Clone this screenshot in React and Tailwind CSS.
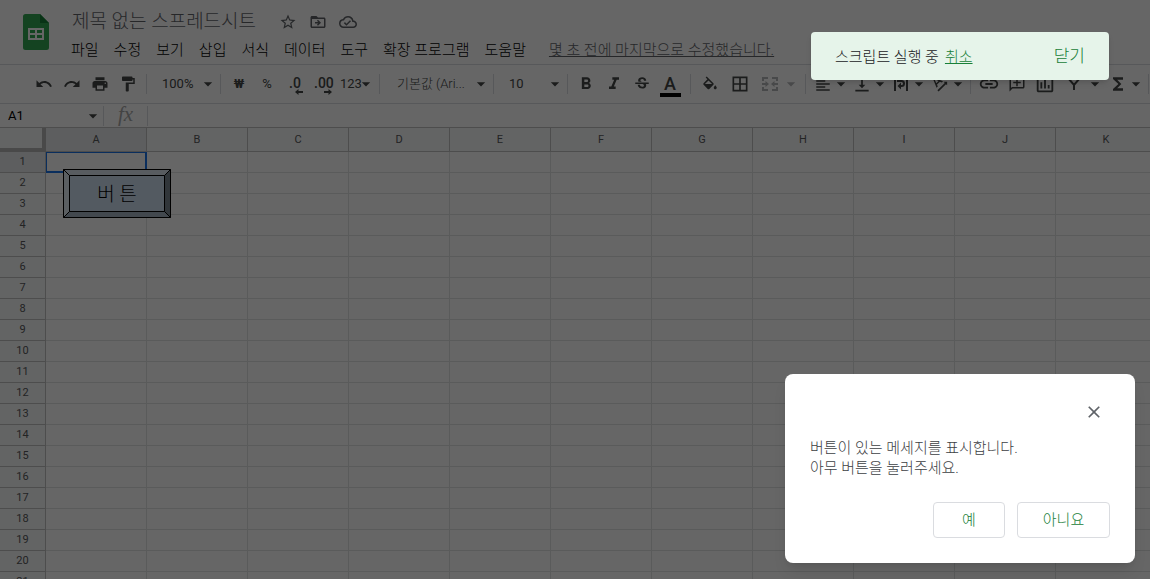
import { useState } from 'react';
import {
  MdArrowDropDown, MdBorderAll, MdClose, MdDriveFileMoveOutline, MdFormatAlignLeft,
  MdFormatBold, MdFormatItalic, MdFormatPaint, MdFunctions, MdLink,
  MdOutlineAddComment, MdOutlineCloudDone, MdOutlineInsertChart, MdPrint, MdRedo,
  MdStarBorder, MdStrikethroughS, MdTextRotationAngleup, MdUndo, MdVerticalAlignBottom,
} from 'react-icons/md';

const MENUS = ['파일', '수정', '보기', '삽입', '서식', '데이터', '도구', '확장 프로그램', '도움말'];
const COLUMNS = 'ABCDEFGHIJK'.split('');
const ROWS = Array.from({ length: 21 }, (_, i) => i + 1);

function SheetsLogo() {
  return (
    <svg width="26" height="36" viewBox="0 0 26 36" aria-hidden="true">
      <path d="M2.5 0H17l9 9v24.500a2.500 2.500 0 0 1-2.500 2.500h-21A2.500 2.500 0 0 1 0 33.500v-31A2.500 2.500 0 0 1 2.500 0z" fill="#34a853" />
      <path d="M17 0l9 9h-9z" fill="#188038" />
      <path fillRule="evenodd" d="M5 14h16v12H5zM7 16v3h5v-3zM14 16v3h5v-3zM7 21v3h5v-3zM14 21v3h5v-3z" fill="#fff" />
    </svg>
  );
}

function FillIcon() {
  return (
    <svg width="18" height="18" viewBox="0 -2 24 24" fill="currentColor" aria-hidden="true">
      <path d="M16.560 8.940 7.620 0 6.210 1.410l2.380 2.380-5.150 5.150c-.59.59-.59 1.540 0 2.120l5.500 5.500c.29.29.68.44 1.060.44s.77-.15 1.060-.44l5.500-5.500c.59-.58.59-1.530 0-2.120zM5.210 10 10 5.210 14.790 10H5.210zM19 11.500s-2 2.170-2 3.500c0 1.100.9 2 2 2s2-.9 2-2c0-1.330-2-3.500-2-3.500z" />
    </svg>
  );
}

function MergeIcon() {
  return (
    <svg width="18" height="18" viewBox="0 0 18 18" fill="none" stroke="currentColor" strokeWidth="2" aria-hidden="true">
      <path d="M2 6V3h5M11 3h5v3M2 12v3h5M11 15h5v-3" />
      <path d="M1 9h4M17 9h-4" />
      <path d="M4.500 6v6L8 9zM13.500 6v6L10 9z" fill="currentColor" stroke="none" />
    </svg>
  );
}

function WrapIcon() {
  return (
    <svg width="18" height="18" viewBox="0 0 18 18" fill="none" stroke="currentColor" strokeWidth="2" aria-hidden="true">
      <path d="M3 2v14M15 2v14M5 6h4.500a2.500 2.500 0 0 1 0 5H8" />
      <path d="M9 7.500v7L5.500 11z" fill="currentColor" stroke="none" />
    </svg>
  );
}

function FilterIcon() {
  return (
    <svg width="18" height="18" viewBox="0 0 18 18" fill="none" stroke="currentColor" strokeWidth="2" aria-hidden="true">
      <path d="M3 3h12L9 10zM9 9v6" />
    </svg>
  );
}

function DecimalIcon({ more }) {
  return (
    <svg width="8" height="6" viewBox="0 0 8 6" className={more ? 'self-end' : 'rotate-180 self-end'} aria-hidden="true">
      <path d="M0 2h4.500V0L8 3 4.500 6V4H0z" fill="currentColor" />
    </svg>
  );
}

function Tool({ label, children }) {
  return (
    <button type="button" aria-label={label} className="flex h-7 w-7 shrink-0 items-center justify-center">
      {children}
    </button>
  );
}

function MenuTool({ label, wide, children }) {
  return (
    <button type="button" aria-label={label} className="flex h-7 shrink-0 items-center">
      <span className="flex w-5 justify-center">{children}</span>
      <MdArrowDropDown size={20} className={wide ? 'ml-px' : '-ml-0.5'} />
    </button>
  );
}

function Divider() {
  return <span className="h-5 w-px shrink-0 bg-[#dadce0]" />;
}

function ToolSelect({ label, value, className }) {
  return (
    <label className={`relative flex h-7 shrink-0 items-center ${className}`}>
      <select aria-label={label} defaultValue={value} className="h-full w-full appearance-none bg-transparent">
        <option>{value}</option>
      </select>
      <MdArrowDropDown size={20} className="pointer-events-none absolute right-[2px]" />
    </label>
  );
}

function Header() {
  return (
    <header className="flex h-16 shrink-0 items-start pl-[23px]">
      <div className="pt-[14px]">
        <SheetsLogo />
      </div>
      <div className="pl-[22px]">
        <div className="flex h-10 items-center pt-1 pl-px text-[#5f6368]">
          <h1 className="pr-[23px] text-[19px] font-light whitespace-nowrap">제목 없는 스프레드시트</h1>
          <div className="flex items-center gap-3">
            <button type="button" aria-label="별표"><MdStarBorder size={18} /></button>
            <button type="button" aria-label="이동"><MdDriveFileMoveOutline size={18} /></button>
            <button type="button" aria-label="문서 상태"><MdOutlineCloudDone size={18} /></button>
          </div>
        </div>
        <nav className="flex h-5 items-center gap-[15px] text-[15px] font-light whitespace-nowrap text-black">
          {MENUS.map((menu) => (
            <button key={menu} type="button">{menu}</button>
          ))}
          <a href="#history" className="pl-2 text-[#5f6368] underline">
            몇 초 전에 마지막으로 수정했습니다.
          </a>
        </nav>
      </div>
    </header>
  );
}

function Toolbar() {
  return (
    <div className="flex h-10 shrink-0 items-center overflow-hidden border-y border-[#dadce0] pl-[30px] text-[13px] text-[#444746]">
      <Tool label="실행취소"><MdUndo size={18} /></Tool>
      <Tool label="재실행"><MdRedo size={18} /></Tool>
      <Tool label="인쇄"><MdPrint size={18} /></Tool>
      <Tool label="서식 복사"><MdFormatPaint size={18} /></Tool>
      <span className="w-1 shrink-0" />
      <Divider />
      <ToolSelect label="확대/축소" value="100%" className="w-[73px] pl-[15px]" />
      <Divider />
      <span className="w-1 shrink-0" />
      <Tool label="통화 형식"><span className="font-bold">₩</span></Tool>
      <Tool label="퍼센트 형식">%</Tool>
      <Tool label="소수점 이하 자릿수 감소">
        <span className="flex w-4 flex-col pt-1 text-[14px] leading-3 font-medium">.0<DecimalIcon /></span>
      </Tool>
      <Tool label="소수점 이하 자릿수 증가">
        <span className="flex w-[18px] flex-col pt-1 text-[14px] leading-3 font-medium">.00<DecimalIcon more /></span>
      </Tool>
      <button type="button" className="flex h-7 w-[42px] shrink-0 items-center pl-[3px]">
        123<MdArrowDropDown size={20} className="-ml-1.5 shrink-0" />
      </button>
      <Divider />
      <ToolSelect label="글꼴" value="기본값 (Ari..." className="w-[113px] pl-[17px] font-light" />
      <Divider />
      <ToolSelect label="글꼴 크기" value="10" className="w-[73px] pl-[15px]" />
      <Divider />
      <span className="w-1 shrink-0" />
      <Tool label="굵게"><MdFormatBold size={20} /></Tool>
      <Tool label="기울임꼴"><MdFormatItalic size={20} /></Tool>
      <Tool label="취소선"><MdStrikethroughS size={18} /></Tool>
      <Tool label="텍스트 색상">
        <span className="mt-1 w-[21px] border-b-4 border-black text-center text-[18px] leading-[18px] font-medium">A</span>
      </Tool>
      <span className="w-1.5 shrink-0" />
      <Divider />
      <span className="w-[5px] shrink-0" />
      <Tool label="채우기 색상"><FillIcon /></Tool>
      <span className="w-0.5 shrink-0" />
      <Tool label="테두리"><MdBorderAll size={20} /></Tool>
      <span className="flex pl-1.5 text-[#b4b6b8]"><MenuTool label="셀 병합" wide><MergeIcon /></MenuTool></span>
      <span className="w-1 shrink-0" />
      <Divider />
      <div className="flex gap-px pr-0.5 pl-[7px]">
        <MenuTool label="가로 맞춤"><MdFormatAlignLeft size={18} /></MenuTool>
        <MenuTool label="세로 맞춤"><MdVerticalAlignBottom size={20} /></MenuTool>
        <MenuTool label="텍스트 줄바꿈"><WrapIcon /></MenuTool>
        <MenuTool label="텍스트 회전"><MdTextRotationAngleup size={20} /></MenuTool>
      </div>
      <Divider />
      <span className="w-1 shrink-0" />
      <Tool label="링크 삽입"><MdLink size={22} /></Tool>
      <Tool label="댓글 삽입"><MdOutlineAddComment size={18} className="-scale-x-100" /></Tool>
      <Tool label="차트 삽입"><MdOutlineInsertChart size={22} /></Tool>
      <div className="flex gap-[3px] pr-0.5 pl-[5px]">
        <MenuTool label="필터 만들기" wide><FilterIcon /></MenuTool>
        <MenuTool label="함수"><MdFunctions size={22} /></MenuTool>
      </div>
      <Divider />
    </div>
  );
}

function FormulaBar() {
  const [cell, setCell] = useState('A1');

  return (
    <div className="flex h-6 shrink-0 items-center border-b border-[#c0c0c0]">
      <label className="flex w-[103px] items-center">
        <input
          aria-label="이름 상자"
          value={cell}
          onChange={(e) => setCell(e.target.value)}
          className="w-0 flex-1 bg-transparent pl-2 text-[13px] text-black outline-none"
        />
        <MdArrowDropDown size={20} className="text-[#444746]" />
      </label>
      <Divider />
      <span className="w-[43px] pb-1 text-center font-['Liberation_Serif'] text-[21px] leading-5 text-[#a8a8a8] italic">fx</span>
      <Divider />
      <input aria-label="수식 입력줄" className="w-0 flex-1 bg-transparent px-2 text-[13px] outline-none" />
    </div>
  );
}

function DrawingButton() {
  return (
    <button type="button" className="absolute top-[41px] left-[63px] h-[49px] w-[108px]">
      <svg viewBox="0 0 108 49" className="absolute inset-0 h-full w-full" stroke="#000" aria-hidden="true">
        <path d="M.5.5h107l-6 6h-95z" fill="#dbe5f0" />
        <path d="M.5.5l6 6v36l-6 6z" fill="#e3eef5" />
        <path d="M107.500.5v48l-6-6v-36z" fill="#7c8892" />
        <path d="M.5 48.500l6-6h95l6 6z" fill="#a6b5c2" />
        <path d="M6.500 6.500h95v36h-95z" fill="#cfe2f3" />
      </svg>
      <span className="relative top-0.5 text-[19px] font-light text-black">버 튼</span>
    </button>
  );
}

function Grid() {
  return (
    <div className="relative min-h-0 flex-1 overflow-hidden">
      <table className="w-0 table-fixed border-separate border-spacing-0 text-[11px] text-[#575a5a]">
        <colgroup>
          <col className="w-[46px]" />
          {COLUMNS.map((name) => <col key={name} className="w-[101px]" />)}
        </colgroup>
        <thead>
          <tr className="h-6">
            <th className="border-r-4 border-b-4 border-[#b7b7b7] bg-[#f8f9fa] p-0" />
            {COLUMNS.map((name) => (
              <th
                key={name}
                scope="col"
                className={`border-r border-b border-[#c0c0c0] px-0 pt-0.5 pb-0 font-normal ${name === 'A' ? 'bg-[#e8eaed]' : 'bg-[#f8f9fa]'}`}
              >
                {name}
              </th>
            ))}
          </tr>
        </thead>
        <tbody>
          {ROWS.map((row) => (
            <tr key={row} className="h-[21px]">
              <th
                scope="row"
                className={`border-r border-b border-[#c0c0c0] p-0 font-normal ${row === 1 ? 'bg-[#e8eaed]' : 'bg-[#f8f9fa]'}`}
              >
                {row}
              </th>
              {COLUMNS.map((name) => (
                <td
                  key={name}
                  className={row === 1 && name === 'A'
                    ? 'border-t border-r-2 border-b-2 border-l border-[#1a73e8] p-0'
                    : 'border-r border-b border-[#e2e3e3] p-0'}
                />
              ))}
            </tr>
          ))}
        </tbody>
      </table>
      <DrawingButton />
    </div>
  );
}

function Snackbar() {
  return (
    <div
      role="status"
      className="absolute top-8 right-[41px] flex h-12 w-[298px] items-center rounded bg-[#e6f4ea] px-6 pt-0.5 text-[15px] font-light text-[#202124] shadow-md"
    >
      <span>스크립트 실행 중</span>
      <button type="button" className="ml-1.5 text-[#188038] underline">취소</button>
      <button type="button" className="ml-auto text-[17px] text-[#188038]">닫기</button>
    </div>
  );
}

function MessageDialog() {
  return (
    <div
      role="dialog"
      aria-label="메시지"
      className="absolute right-[15px] bottom-4 w-[350px] rounded-lg bg-white px-[25px] pt-7 pb-[25px] text-[15px] font-light shadow-lg"
    >
      <div className="flex justify-end pr-[6px]">
        <button type="button" aria-label="닫기" className="text-[#5f6368]"><MdClose size={20} /></button>
      </div>
      <p className="pt-4 leading-5 text-[#3c4043]">
        버튼이 있는 메세지를 표시합니다.
        <br />
        아무 버튼을 눌러주세요.
      </p>
      <div className="flex justify-end gap-3 pt-6 text-[#188038]">
        <button type="button" className="h-9 w-[72px] rounded border border-[#dadce0]">예</button>
        <button type="button" className="h-9 w-[93px] rounded border border-[#dadce0]">아니요</button>
      </div>
    </div>
  );
}

export default function App() {
  return (
    <div className="relative flex h-screen flex-col overflow-hidden bg-white font-[Roboto,'Noto_Sans_CJK_KR',sans-serif]">
      <Header />
      <Toolbar />
      <FormulaBar />
      <Grid />
      <div className="absolute inset-0 bg-black/60" />
      <Snackbar />
      <MessageDialog />
    </div>
  );
}
